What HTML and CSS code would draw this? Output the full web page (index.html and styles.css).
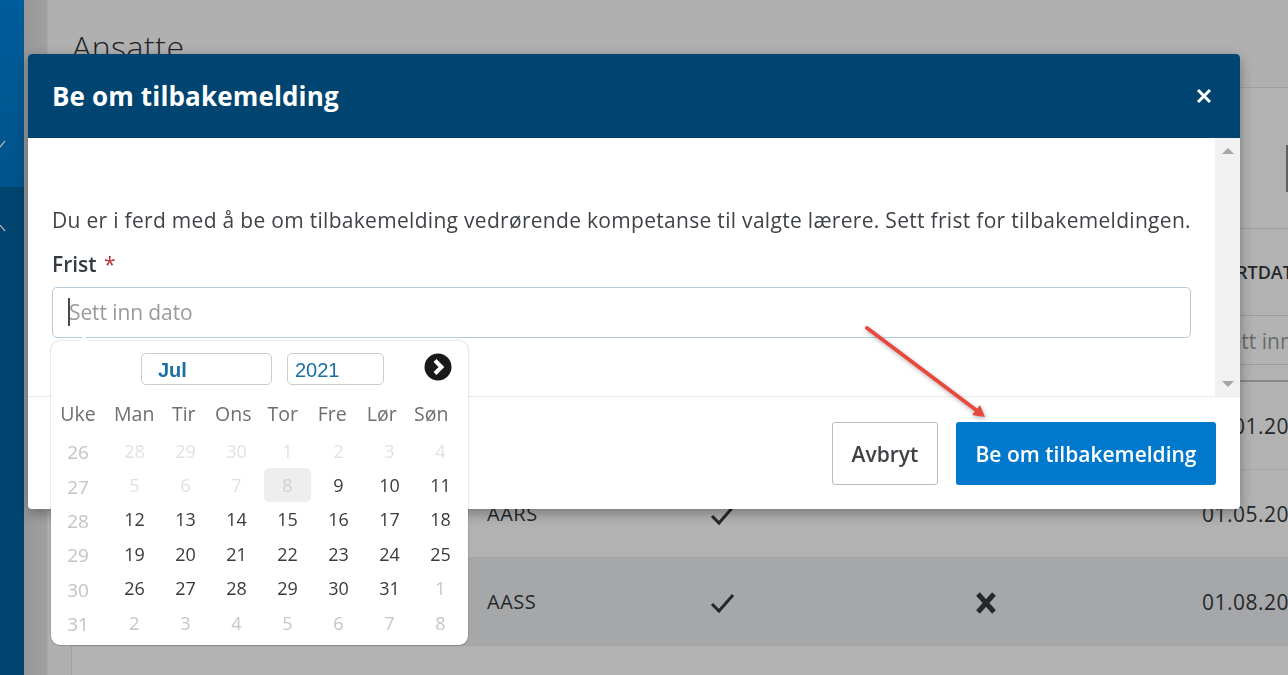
FILE: index.html
```html
<!DOCTYPE html>
<html lang="no">
<head>
  <meta charset="UTF-8" />
  <meta name="viewport" content="width=device-width, initial-scale=1.0" />
  <title>Be om tilbakemelding</title>
  <link rel="stylesheet" href="styles.css">
</head>
<body>
  <div class="app">
    <aside class="sidebar">
      <div class="nav-item nav-active">
        <svg class="nav-chevron" width="8" height="10" viewBox="0 0 8 10"><path d="M0 7 L2 9 L7 3" /></svg>
      </div>
      <div class="nav-item">
        <svg class="nav-chevron" width="8" height="10" viewBox="0 0 8 10"><path d="M0 2 L2 0 L7 6" /></svg>
      </div>
    </aside>
    <div class="gutter"></div>
    <main class="content">
      <h1 class="page-title">Ansatte</h1>
      <section class="card">
        <div class="toolbar">
          <span class="toolbar-btn"></span>
        </div>
        <div class="table">
          <div class="table-head">
            <span></span><span></span><span></span><span></span><span class="head-date">STARTDATO</span>
          </div>
          <div class="table-filter">
            <span></span><span></span><span></span><span></span><span class="filter-input">Sett inn dato</span>
          </div>
          <div class="table-row">
            <span></span><span></span><span></span><span></span><span class="date-cell">01.01.2021</span>
          </div>
          <div class="table-row">
            <span></span>
            <span>AARS</span>
            <span><svg class="tick" width="26" height="22" viewBox="0 0 26 22"><path d="M2 12 L9 19 L23 3" /></svg></span>
            <span></span>
            <span class="date-cell">01.05.2021</span>
          </div>
          <div class="table-row row-dark">
            <span></span>
            <span>AASS</span>
            <span><svg class="tick" width="26" height="22" viewBox="0 0 26 22"><path d="M2 12 L9 19 L23 3" /></svg></span>
            <span><svg class="cross" width="22" height="22" viewBox="0 0 22 22"><path d="M3 2 L19 20 M19 2 L3 20" /></svg></span>
            <span class="date-cell">01.08.2021</span>
          </div>
        </div>
      </section>
    </main>
  </div>

  <div class="backdrop"></div>

  <div class="modal">
    <header class="modal-header">
      <h2>Be om tilbakemelding</h2>
      <svg class="modal-close" width="16" height="16" viewBox="0 0 16 16"><path d="M2 2 L14 14 M14 2 L2 14" /></svg>
    </header>
    <div class="modal-scroll">
      <div class="modal-body">
        <p class="intro">Du er i ferd med å be om tilbakemelding vedrørende kompetanse til valgte lærere. Sett frist for tilbakemeldingen.</p>
        <label class="field-label">Frist <span class="required">*</span></label>
        <div class="date-field">
          <input class="date-input" type="text" placeholder="Sett inn dato">
          <span class="caret"></span>
        </div>
      </div>
      <div class="scrollbar">
        <span class="scroll-up"></span>
        <span class="scroll-down"></span>
      </div>
    </div>
    <footer class="modal-footer">
      <button class="btn btn-cancel">Avbryt</button>
      <button class="btn btn-primary">Be om tilbakemelding</button>
    </footer>
  </div>

  <div class="datepicker">
    <div class="dp-head">
      <div class="dp-select dp-month">Jul</div>
      <div class="dp-select dp-year">2021</div>
      <svg class="dp-next" width="28" height="28" viewBox="0 0 28 28">
        <circle cx="14" cy="14" r="13.5" />
        <path d="M11 7.5 L17.5 14 L11 20.5" />
      </svg>
    </div>
    <div class="dp-weekdays">
      <span class="dp-uke">Uke</span><span>Man</span><span>Tir</span><span>Ons</span><span>Tor</span><span>Fre</span><span>Lør</span><span>Søn</span>
    </div>
    <div class="dp-grid">
      <span class="dp-week">26</span><span class="off">28</span><span class="off">29</span><span class="off">30</span><span class="off">1</span><span class="off">2</span><span class="off">3</span><span class="off">4</span>

      <span class="dp-week">27</span><span class="off">5</span><span class="off">6</span><span class="off">7</span><span class="off today">8</span><span>9</span><span>10</span><span>11</span>

      <span class="dp-week">28</span><span>12</span><span>13</span><span>14</span><span>15</span><span>16</span><span>17</span><span>18</span>

      <span class="dp-week">29</span><span>19</span><span>20</span><span>21</span><span>22</span><span>23</span><span>24</span><span>25</span>

      <span class="dp-week">30</span><span>26</span><span>27</span><span>28</span><span>29</span><span>30</span><span>31</span><span class="next">1</span>

      <span class="dp-week">31</span><span class="next">2</span><span class="next">3</span><span class="next">4</span><span class="next">5</span><span class="next">6</span><span class="next">7</span><span class="next">8</span>
    </div>
  </div>

  <svg class="annotation" width="140" height="110" viewBox="0 0 140 110">
    <path class="arrow-line" d="M5 5 L114 87" />
    <path class="arrow-head" d="M123 94 L110 92 L118 82 Z" />
  </svg>
</body>
</html>
```

FILE: styles.css
```css
* {
  box-sizing: border-box;
}

html,
body {
  margin: 0;
  height: 100%;
  overflow: hidden;
}

body {
  font-family: "Open Sans", Arial, sans-serif;
  color: #343a40;
  background-color: #ffffff;
}

.app {
  display: flex;
  height: 675px;
}

/* page behind the dialog */
.sidebar {
  width: 24px;
  flex-shrink: 0;
  display: flex;
  flex-direction: column;
  background-color: #0062a0;
}

.nav-item {
  height: 187px;
  background: linear-gradient(#0084de, #0078c8);
  display: flex;
  align-items: flex-end;
  padding-bottom: 39px;
}

.nav-item + .nav-item {
  height: 88px;
  background: transparent;
  padding-bottom: 40px;
}

.nav-chevron {
  margin-left: -2px;
}

.nav-chevron path {
  fill: none;
  stroke: #ffffff;
  stroke-width: 1.2;
}

.gutter {
  width: 24px;
  flex-shrink: 0;
  background: linear-gradient(90deg, #d8d8d8, #e6e6e6);
  border-right: 1px solid #f4f4f4;
}

.content {
  flex: 1;
  padding: 24px 0 0 23px;
  background-color: #fcfcfc;
  min-width: 0;
  overflow: hidden;
}

.page-title {
  margin: 0 0 17px 1px;
  font-size: 32px;
  font-weight: 300;
  line-height: 46px;
  letter-spacing: 0.5px;
  color: #2b2f33;
}

.card {
  background-color: #ffffff;
  border: 1px solid #e6e6e6;
  border-right: none;
  height: 600px;
}

.toolbar {
  height: 141px;
  padding-top: 57px;
  display: flex;
  justify-content: flex-end;
  border-bottom: 1px solid #e2e2e2;
}

.toolbar-btn {
  width: 2px;
  height: 47px;
  background-color: #8a8a8a;
}

.table {
  font-size: 20px;
  letter-spacing: 0.5px;
}

.table-head,
.table-filter,
.table-row {
  display: grid;
  grid-template-columns: 415px 223px 265px 227px 1fr;
}

.table-head {
  height: 86px;
  font-size: 18px;
  font-weight: 600;
  align-items: center;
  letter-spacing: 0;
  white-space: nowrap;
}

.head-date {
  margin-left: 2px;
}

.table-filter {
  height: 67px;
  border-bottom: 2px solid #c0c4c6;
}

.filter-input {
  margin-left: 16px;
  height: 50px;
  font-size: 21px;
  line-height: 50px;
  letter-spacing: 0;
  white-space: nowrap;
  color: #999999;
  border-top: 1px solid #dddddd;
  border-bottom: 1px solid #dddddd;
}

.table-row {
  height: 88px;
  align-items: center;
  white-space: nowrap;
  border-bottom: 1px solid #eeeeee;
}

.date-cell {
  font-size: 21px;
}

.row-dark {
  background-color: #eef0f2;
}

.tick,
.cross {
  display: block;
  margin-top: 3px;
}

.tick path {
  fill: none;
  stroke: #343a40;
  stroke-width: 3;
}

.cross path {
  fill: none;
  stroke: #343a40;
  stroke-width: 5;
}

.backdrop {
  position: fixed;
  inset: 0;
  background-color: rgba(0, 0, 0, 0.3);
}

/* dialog */
.modal {
  position: fixed;
  left: 28px;
  top: 54px;
  width: 1212px;
  height: 455px;
  display: flex;
  flex-direction: column;
  background-color: #ffffff;
  border-radius: 4px;
  box-shadow: 0 4px 14px rgba(0, 0, 0, 0.35);
  overflow: hidden;
}

.modal-header {
  height: 84px;
  flex-shrink: 0;
  display: flex;
  align-items: center;
  justify-content: space-between;
  padding: 0 28px 0 24px;
  background-color: #004571;
  color: #ffffff;
}

.modal-header h2 {
  margin: 0;
  font-size: 26px;
  font-weight: 700;
  letter-spacing: 0.15px;
}

.modal-close path {
  fill: none;
  stroke: #ffffff;
  stroke-width: 3;
}

.modal-scroll {
  flex: 1;
  display: flex;
  min-height: 0;
}

.modal-body {
  flex: 1;
  padding: 68px 24px 0;
}

.intro {
  margin: 0 0 17px;
  font-size: 21px;
  line-height: 28px;
  letter-spacing: 0.3px;
  white-space: nowrap;
  color: #3f4347;
}

.field-label {
  display: block;
  margin-bottom: 10px;
  font-size: 21px;
  font-weight: 600;
  line-height: 26px;
}

.required {
  margin-left: 2px;
  color: #b83232;
  font-weight: 400;
}

.date-field {
  position: relative;
}

.date-input {
  display: block;
  width: 100%;
  height: 51px;
  padding: 0 16px 2px;
  font-family: inherit;
  font-size: 21px;
  letter-spacing: -0.1px;
  border: 1px solid #b5cbdc;
  border-radius: 5px;
  outline: none;
}

.date-input::placeholder {
  color: #9a9a9a;
}

.caret {
  position: absolute;
  left: 16px;
  top: 11px;
  width: 2px;
  height: 28px;
  background-color: #4a4a4a;
}

.scrollbar {
  width: 25px;
  flex-shrink: 0;
  background-color: #f1f1f1;
  display: flex;
  flex-direction: column;
  justify-content: space-between;
  align-items: center;
  padding: 10px 0 9px;
}

.scroll-up,
.scroll-down {
  width: 0;
  height: 0;
  border-left: 6px solid transparent;
  border-right: 6px solid transparent;
}

.scroll-up {
  border-bottom: 6px solid #a6a6a6;
}

.scroll-down {
  border-top: 6px solid #a6a6a6;
}

.modal-footer {
  height: 113px;
  flex-shrink: 0;
  display: flex;
  justify-content: flex-end;
  gap: 18px;
  padding: 25px 24px 0;
  border-top: 1px solid #e9e9e9;
}

.btn {
  height: 63px;
  font-family: inherit;
  font-size: 21px;
  font-weight: 600;
  border-radius: 3px;
}

.btn-cancel {
  width: 106px;
  background-color: #ffffff;
  color: #3f4347;
  border: 1px solid #b8bcc0;
}

.btn-primary {
  width: 260px;
  background-color: #0078cc;
  color: #ffffff;
  border: none;
}

/* date picker popup */
.datepicker {
  position: fixed;
  left: 51px;
  top: 341px;
  width: 417px;
  height: 304px;
  background-color: #ffffff;
  border-radius: 9px;
  box-shadow: 0 0 2px rgba(0, 0, 0, 0.3), 0 1px 1px rgba(0, 0, 0, 0.12);
}

.datepicker::before {
  content: "";
  position: absolute;
  left: 27px;
  top: -5px;
  width: 0;
  height: 0;
  border-left: 6px solid transparent;
  border-right: 6px solid transparent;
  border-bottom: 6px solid #ffffff;
}

.dp-head {
  position: relative;
  height: 54px;
  padding: 12px 0 0 90px;
  display: flex;
  gap: 15px;
}

.dp-select {
  height: 32px;
  font-family: "Liberation Sans", Arial, sans-serif;
  font-size: 20px;
  line-height: 33px;
  color: #1c6fa3;
  border: 1px solid #cccccc;
  border-radius: 5px;
}

.dp-month {
  width: 131px;
  padding-left: 16px;
  font-weight: 700;
}

.dp-year {
  width: 97px;
  padding-left: 7px;
}

.dp-next {
  position: absolute;
  left: 373px;
  top: 12px;
}

.dp-next circle {
  fill: #17191b;
}

.dp-next path {
  fill: none;
  stroke: #ffffff;
  stroke-width: 4;
}

.dp-weekdays {
  display: grid;
  grid-template-columns: 58.5px repeat(7, 49.5px);
  height: 38.5px;
  padding-bottom: 2px;
  font-size: 19.5px;
  color: #6f6f6f;
}

.dp-weekdays span,
.dp-grid span {
  display: flex;
  align-items: center;
  justify-content: center;
}

.dp-weekdays .dp-uke {
  padding-right: 4.5px;
}

.dp-grid {
  display: grid;
  grid-template-columns: 58px repeat(7, 51px);
  grid-auto-rows: 34.4px;
  font-size: 18px;
  color: #3a3a3a;
}

.dp-grid .dp-week {
  color: #c4c4c4;
  font-size: 19px;
  padding: 3px 4px 0 0;
}

.dp-grid .off {
  color: #e2e2e2;
}

.dp-grid .next {
  color: #c6c6c6;
}

.dp-grid .today {
  background-color: #eeeeee;
  border-radius: 5px;
  color: #cfcfcf;
  margin: 0 2px;
}

/* arrow drawn on top of the screenshot */
.annotation {
  position: fixed;
  left: 862px;
  top: 323px;
  overflow: visible;
  filter: drop-shadow(1px 2px 2px rgba(0, 0, 0, 0.3));
}

.arrow-line {
  fill: none;
  stroke: #e8483f;
  stroke-width: 3.8;
  stroke-linecap: round;
}

.arrow-head {
  fill: #e8483f;
}
```
